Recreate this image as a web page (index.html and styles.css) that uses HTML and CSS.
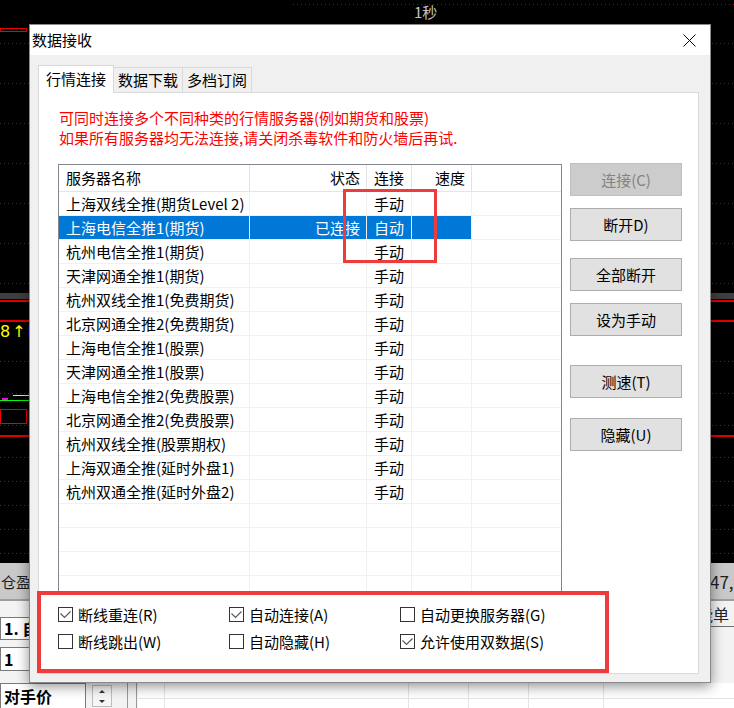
FILE: index.html
```html
<!DOCTYPE html>
<html lang="zh-CN">
<head>
    <meta charset="UTF-8">
    <title>数据接收</title>
    <link rel="stylesheet" href="styles.css">
</head>
<body>
    <!-- trading window behind the dialog -->
    <div class="desk">
        <div class="timer">1秒</div>
        <div class="dots dots-first"></div>
        <div class="dots dots-upper"></div>
        <div class="dots dots-mid"></div>
        <div class="dots dots-low"></div>
        <div class="pane-split"></div>
        <div class="red-line line-a"></div>
        <div class="red-line line-b"></div>
        <div class="red-line line-c"></div>
        <div class="tag-box tag-top"></div>
        <div class="tag-box tag-bottom"></div>
        <div class="price-tag"><span class="yellow">8</span><span class="yellow arrow">↑</span><span class="magenta">M</span></div>
        <div class="trace trace-yellow"></div>
        <div class="trace trace-green"></div>
        <div class="trace trace-magenta"></div>

        <div class="status-band">
            <span class="status-left">仓盈</span>
            <span class="status-right">47,9</span>
        </div>
        <div class="order-pane">
            <div class="order-field field-mode">1. 自</div>
            <div class="order-field field-qty">1</div>
            <div class="order-field field-price">对手价</div>
            <div class="spin"><span class="spin-up"></span><span class="spin-down"></span></div>
            <div class="order-divider"></div>
            <div class="order-table"></div>
            <div class="side-label">能单</div>
        </div>
    </div>

    <div class="dialog">
        <div class="titlebar">
            <span class="title">数据接收</span>
            <svg class="close" width="13" height="13" viewBox="0 0 13 13">
                <path d="M0.5 0.5 L12.5 12.5 M12.5 0.5 L0.5 12.5" stroke="#000" stroke-width="1"/>
            </svg>
        </div>
        <div class="dialog-body">
            <div class="tabs">
                <div class="tab active">行情连接</div>
                <div class="tab">数据下载</div>
                <div class="tab">多档订阅</div>
            </div>
            <div class="panel">
                <p class="notice">可同时连接多个不同种类的行情服务器(例如期货和股票)</p>
                <p class="notice">如果所有服务器均无法连接,请关闭杀毒软件和防火墙后再试.</p>

                <div class="main">
                    <div class="list">
                        <div class="list-row list-head">
                            <div class="cell name">服务器名称</div>
                            <div class="cell right">状态</div>
                            <div class="cell center">连接</div>
                            <div class="cell right">速度</div>
                            <div class="cell"></div>
                        </div>
                        <div class="list-row">
                            <div class="cell name">上海双线全推(期货Level 2)</div>
                            <div class="cell right"></div>
                            <div class="cell center">手动</div>
                            <div class="cell"></div>
                            <div class="cell"></div>
                        </div>
                        <div class="list-row selected">
                            <div class="cell name">上海电信全推1(期货)</div>
                            <div class="cell right">已连接</div>
                            <div class="cell center">自动</div>
                            <div class="cell"></div>
                            <div class="cell"></div>
                        </div>
                        <div class="list-row">
                            <div class="cell name">杭州电信全推1(期货)</div>
                            <div class="cell right"></div>
                            <div class="cell center">手动</div>
                            <div class="cell"></div>
                            <div class="cell"></div>
                        </div>
                        <div class="list-row">
                            <div class="cell name">天津网通全推1(期货)</div>
                            <div class="cell right"></div>
                            <div class="cell center">手动</div>
                            <div class="cell"></div>
                            <div class="cell"></div>
                        </div>
                        <div class="list-row">
                            <div class="cell name">杭州双线全推1(免费期货)</div>
                            <div class="cell right"></div>
                            <div class="cell center">手动</div>
                            <div class="cell"></div>
                            <div class="cell"></div>
                        </div>
                        <div class="list-row">
                            <div class="cell name">北京网通全推2(免费期货)</div>
                            <div class="cell right"></div>
                            <div class="cell center">手动</div>
                            <div class="cell"></div>
                            <div class="cell"></div>
                        </div>
                        <div class="list-row">
                            <div class="cell name">上海电信全推1(股票)</div>
                            <div class="cell right"></div>
                            <div class="cell center">手动</div>
                            <div class="cell"></div>
                            <div class="cell"></div>
                        </div>
                        <div class="list-row">
                            <div class="cell name">天津网通全推1(股票)</div>
                            <div class="cell right"></div>
                            <div class="cell center">手动</div>
                            <div class="cell"></div>
                            <div class="cell"></div>
                        </div>
                        <div class="list-row">
                            <div class="cell name">上海电信全推2(免费股票)</div>
                            <div class="cell right"></div>
                            <div class="cell center">手动</div>
                            <div class="cell"></div>
                            <div class="cell"></div>
                        </div>
                        <div class="list-row">
                            <div class="cell name">北京网通全推2(免费股票)</div>
                            <div class="cell right"></div>
                            <div class="cell center">手动</div>
                            <div class="cell"></div>
                            <div class="cell"></div>
                        </div>
                        <div class="list-row">
                            <div class="cell name">杭州双线全推(股票期权)</div>
                            <div class="cell right"></div>
                            <div class="cell center">手动</div>
                            <div class="cell"></div>
                            <div class="cell"></div>
                        </div>
                        <div class="list-row">
                            <div class="cell name">上海双通全推(延时外盘1)</div>
                            <div class="cell right"></div>
                            <div class="cell center">手动</div>
                            <div class="cell"></div>
                            <div class="cell"></div>
                        </div>
                        <div class="list-row">
                            <div class="cell name">杭州双通全推(延时外盘2)</div>
                            <div class="cell right"></div>
                            <div class="cell center">手动</div>
                            <div class="cell"></div>
                            <div class="cell"></div>
                        </div>
                        <div class="list-row"><div class="cell"></div><div class="cell"></div><div class="cell"></div><div class="cell"></div><div class="cell"></div></div>
                        <div class="list-row"><div class="cell"></div><div class="cell"></div><div class="cell"></div><div class="cell"></div><div class="cell"></div></div>
                        <div class="list-row"><div class="cell"></div><div class="cell"></div><div class="cell"></div><div class="cell"></div><div class="cell"></div></div>
                        <div class="list-row"><div class="cell"></div><div class="cell"></div><div class="cell"></div><div class="cell"></div><div class="cell"></div></div>
                    </div>

                    <div class="actions">
                        <button class="btn" disabled>连接(C)</button>
                        <button class="btn mt12">断开D)</button>
                        <button class="btn mt17">全部断开</button>
                        <button class="btn mt12">设为手动</button>
                        <button class="btn mt29">测速(T)</button>
                        <button class="btn mt20">隐藏(U)</button>
                    </div>
                </div>

                <div class="options">
                    <label class="opt"><span class="box checked"><svg width="13" height="13" viewBox="0 0 13 13"><polyline points="1.5,5.5 5.5,9.5 11.5,3.5" fill="none" stroke="#5a5a5a" stroke-width="1.2"/></svg></span>断线重连(R)</label>
                    <label class="opt"><span class="box checked"><svg width="13" height="13" viewBox="0 0 13 13"><polyline points="1.5,5.5 5.5,9.5 11.5,3.5" fill="none" stroke="#5a5a5a" stroke-width="1.2"/></svg></span>自动连接(A)</label>
                    <label class="opt"><span class="box"></span>自动更换服务器(G)</label>
                    <label class="opt"><span class="box"></span>断线跳出(W)</label>
                    <label class="opt"><span class="box"></span>自动隐藏(H)</label>
                    <label class="opt"><span class="box checked"><svg width="13" height="13" viewBox="0 0 13 13"><polyline points="1.5,5.5 5.5,9.5 11.5,3.5" fill="none" stroke="#5a5a5a" stroke-width="1.2"/></svg></span>允许使用双数据(S)</label>
                </div>
            </div>
        </div>
    </div>

    <!-- red annotation boxes drawn over the screenshot -->
    <div class="mark mark-col"></div>
    <div class="mark mark-opts"></div>
</body>
</html>
```

FILE: styles.css
```css
* {
    margin: 0;
    padding: 0;
    box-sizing: border-box;
}

body {
    position: relative;
    width: 734px;
    height: 708px;
    overflow: hidden;
    background-color: #000;
    font-family: "Noto Sans CJK SC", "Microsoft YaHei", sans-serif;
    font-size: 15px;
    color: #000;
}

/* ---------- background window ---------- */

.desk {
    position: absolute;
    inset: 0;
}

.timer {
    position: absolute;
    left: 414px;
    top: 1px;
    color: #c4c4c4;
    font-size: 15px;
    line-height: 22px;
}

.dots {
    position: absolute;
    left: 0;
    right: 0;
    background: repeating-linear-gradient(to bottom, #b80000 0 1px, transparent 1px 40px);
    -webkit-mask-image: repeating-linear-gradient(to right, #000 0 1px, transparent 1px 4px);
    mask-image: repeating-linear-gradient(to right, #000 0 1px, transparent 1px 4px);
}

.dots-first {
    top: 4px;
    left: 293px;
    height: 1px;
}

.dots-upper {
    top: 43px;
    height: 244px;
}

.dots-mid {
    top: 361px;
    height: 97px;
    background: repeating-linear-gradient(to bottom, #b80000 0 1px, transparent 1px 32px);
}

.dots-low {
    top: 481px;
    height: 74px;
    background: repeating-linear-gradient(to bottom, #b80000 0 1px, transparent 1px 24px);
}

.pane-split {
    position: absolute;
    left: 0;
    right: 0;
    top: 293px;
    height: 6px;
    background-color: #3e3e3e;
}

.red-line {
    position: absolute;
    left: 0;
    right: 0;
    height: 2px;
    background-color: #e00000;
}

.line-a { top: 300px; }
.line-b { top: 320px; }
.line-c { top: 435px; }

.tag-box {
    position: absolute;
    left: 0;
    width: 27px;
    border: 1px solid #f00000;
}

.tag-top {
    top: 28px;
    height: 4px;
}

.tag-bottom {
    top: 409px;
    height: 15px;
}

.price-tag {
    position: absolute;
    left: 0;
    top: 322px;
    font-family: "DejaVu Sans", sans-serif;
    font-size: 16px;
    line-height: 20px;
    white-space: nowrap;
}

.yellow { color: #ffff00; }
.magenta { color: #ff00ff; margin-left: 2px; }
.arrow { margin-left: 2px; }

.trace {
    position: absolute;
    height: 1px;
}

.trace-yellow {
    left: 13px;
    width: 20px;
    top: 395px;
    background-color: #ffff00;
}

.trace-green {
    left: 0;
    width: 30px;
    top: 400px;
    background-color: #00ff00;
}

.trace-magenta {
    left: 2px;
    width: 6px;
    top: 398px;
    height: 2px;
    background-color: #ff00ff;
}

.status-band {
    position: absolute;
    left: 0;
    right: 0;
    top: 563px;
    height: 38px;
    display: flex;
    justify-content: space-between;
    align-items: center;
    background-color: #c9c9c9;
    border-bottom: 2px solid #9e9e9e;
    font-size: 17px;
    color: #1e1e1e;
    white-space: nowrap;
    overflow: hidden;
}

.status-left {
    margin-left: 1px;
    font-size: 15px;
}

.status-right {
    margin-right: -9px;
}

.order-pane {
    position: absolute;
    left: 0;
    right: 0;
    top: 601px;
    bottom: 0;
    background-color: #f3f3f3;
}

.order-field {
    position: absolute;
    left: 0;
    background-color: #fff;
    border: 1px solid #7a7a7a;
    font-weight: bold;
    font-size: 16px;
    padding-left: 3px;
    white-space: nowrap;
    overflow: hidden;
}

.field-mode {
    top: 16px;
    width: 50px;
    height: 23px;
    line-height: 21px;
}

.field-qty {
    top: 46px;
    width: 50px;
    height: 24px;
    line-height: 22px;
}

.field-price {
    top: 82px;
    width: 86px;
    height: 26px;
    line-height: 24px;
}

.spin {
    position: absolute;
    left: 92px;
    top: 84px;
    width: 20px;
    height: 22px;
    display: flex;
    flex-direction: column;
    justify-content: space-around;
    align-items: center;
    border: 1px solid #bdbdbd;
    background-color: #f6f6f6;
}

.spin-up,
.spin-down {
    width: 0;
    height: 0;
    border-left: 3px solid transparent;
    border-right: 3px solid transparent;
}

.spin-up {
    border-bottom: 3px solid #333;
}

.spin-down {
    border-top: 3px solid #333;
}

.order-divider {
    position: absolute;
    left: 127px;
    top: 82px;
    width: 10px;
    bottom: 0;
    border-left: 1px solid #9a9a9a;
    border-right: 1px solid #9a9a9a;
}

.order-table {
    position: absolute;
    left: 138px;
    right: 0;
    top: 82px;
    bottom: 0;
    background:
        linear-gradient(#e4e4e4, #e4e4e4) 0 15px / 100% 1px no-repeat,
        linear-gradient(#e4e4e4, #e4e4e4) 26px 0 / 1px 100% no-repeat,
        linear-gradient(#e4e4e4, #e4e4e4) 270px 0 / 1px 100% no-repeat,
        linear-gradient(#e4e4e4, #e4e4e4) 330px 0 / 1px 100% no-repeat,
        linear-gradient(#e4e4e4, #e4e4e4) 390px 0 / 1px 100% no-repeat,
        linear-gradient(#e4e4e4, #e4e4e4) 465px 0 / 1px 100% no-repeat,
        #fff;
}

.side-label {
    position: absolute;
    left: 697px;
    top: 2px;
    width: 37px;
    height: 24px;
    font-size: 16px;
    line-height: 22px;
    white-space: nowrap;
    border-bottom: 1px solid #6f6f6f;
    color: #222;
}

/* ---------- dialog ---------- */

.dialog {
    position: absolute;
    left: 29px;
    top: 24px;
    width: 682px;
    height: 659px;
    display: flex;
    flex-direction: column;
    background-color: #f0f0f0;
    border: 1px solid #8a8a8a;
    box-shadow: 0 3px 12px rgba(0, 0, 0, 0.45);
}

.titlebar {
    height: 30px;
    display: flex;
    justify-content: space-between;
    align-items: center;
    padding: 0 14px 0 2px;
    background-color: #fff;
    line-height: 30px;
}

.close {
    display: block;
}

.dialog-body {
    flex: 1;
    display: flex;
    flex-direction: column;
    padding: 10px 11px 8px 8px;
}

.tabs {
    display: flex;
    align-items: flex-end;
    height: 27px;
}

.tab {
    height: 25px;
    line-height: 24px;
    padding: 0 4px;
    margin-left: -1px;
    border: 1px solid #d9d9d9;
    border-bottom: none;
    background-color: #f0f0f0;
}

.tab.active {
    position: relative;
    z-index: 1;
    height: 28px;
    line-height: 26px;
    padding: 0 7px;
    margin-left: 0;
    margin-bottom: -1px;
    background-color: #fff;
}

.panel {
    flex: 1;
    display: flex;
    flex-direction: column;
    padding: 15px 16px 0 19px;
    background-color: #fff;
    border: 1px solid #d9d9d9;
}

.notice {
    color: #ff0000;
    line-height: 20px;
    padding-left: 1px;
}

.main {
    display: flex;
    gap: 8px;
    margin-top: 16px;
}

.list {
    width: 504px;
    height: 428px;
    overflow: hidden;
    border: 1px solid #828790;
}

.list-row {
    display: grid;
    grid-template-columns: 191px 117px 45px 60px 1fr;
    height: 24px;
    line-height: 23px;
    border-bottom: 1px solid #f0f0f0;
}

.list-head {
    height: 27px;
    line-height: 26px;
    border-bottom-color: #e5e5e5;
}

.cell {
    padding: 0 6px;
    white-space: nowrap;
    overflow: hidden;
    border-right: 1px solid #f0f0f0;
}

.cell:last-child {
    border-right: none;
}

.list-head .cell {
    border-right-color: #e3e3e3;
}

.cell.name {
    padding-left: 7px;
}

.cell.right {
    text-align: right;
}

.cell.center {
    padding: 0;
    text-align: center;
}

.list-row.selected .cell {
    background-color: #0078d7;
    color: #fff;
}

.list-row.selected .cell:last-child {
    background-color: transparent;
}

.actions {
    width: 112px;
    display: flex;
    flex-direction: column;
    margin-top: -1px;
}

.btn {
    height: 33px;
    font: inherit;
    color: #000;
    background-color: #e1e1e1;
    border: 1px solid #adadad;
}

.btn:disabled {
    color: #838383;
    background-color: #cccccc;
    border-color: #bfbfbf;
}

.mt12 { margin-top: 12px; }
.mt17 { margin-top: 17px; }
.mt20 { margin-top: 20px; }
.mt29 { margin-top: 29px; }

.options {
    display: grid;
    grid-template-columns: 171px 171px auto;
    row-gap: 6px;
    margin-top: 12px;
    line-height: 21px;
}

.opt {
    display: flex;
    align-items: center;
}

.box {
    width: 15px;
    height: 15px;
    display: flex;
    margin-right: 5px;
    background-color: #fff;
    border: 1px solid #333;
}

/* ---------- annotations ---------- */

.mark {
    position: absolute;
    border: 3px solid #ee3b3b;
}

.mark-col {
    left: 343px;
    top: 189px;
    width: 94px;
    height: 74px;
}

.mark-opts {
    left: 37px;
    top: 591px;
    width: 572px;
    height: 82px;
    border-width: 4px;
}
```
